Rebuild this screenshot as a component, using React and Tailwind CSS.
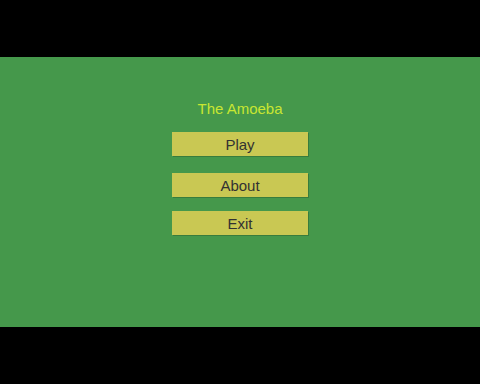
import React from "react";

const BUTTONS = [
  { label: "Play", gap: "mt-[13px]" },
  { label: "About", gap: "mt-[17px]" },
  { label: "Exit", gap: "mt-[14px]" },
];

function MenuButton({ label, gap }) {
  return (
    <button
      className={`${gap} flex h-[24px] w-[136px] items-center justify-center bg-[#c9c853] text-[15px] leading-none text-[#323232] shadow-[1px_1px_0_rgba(0,0,0,0.18)]`}
    >
      {label}
    </button>
  );
}

export default function App() {
  return (
    <main
      className="flex h-[384px] w-[480px] flex-col justify-center bg-black"
      style={{ fontFamily: '"Liberation Sans", Arial, sans-serif' }}
    >
      <div className="flex h-[270px] w-full flex-col items-center bg-[#45984b] pt-[42px]">
        <h1 className="h-[20px] text-[15px] leading-[20px] text-[#c8e632]">The Amoeba</h1>
        {BUTTONS.map((b) => (
          <MenuButton key={b.label} label={b.label} gap={b.gap} />
        ))}
      </div>
    </main>
  );
}
